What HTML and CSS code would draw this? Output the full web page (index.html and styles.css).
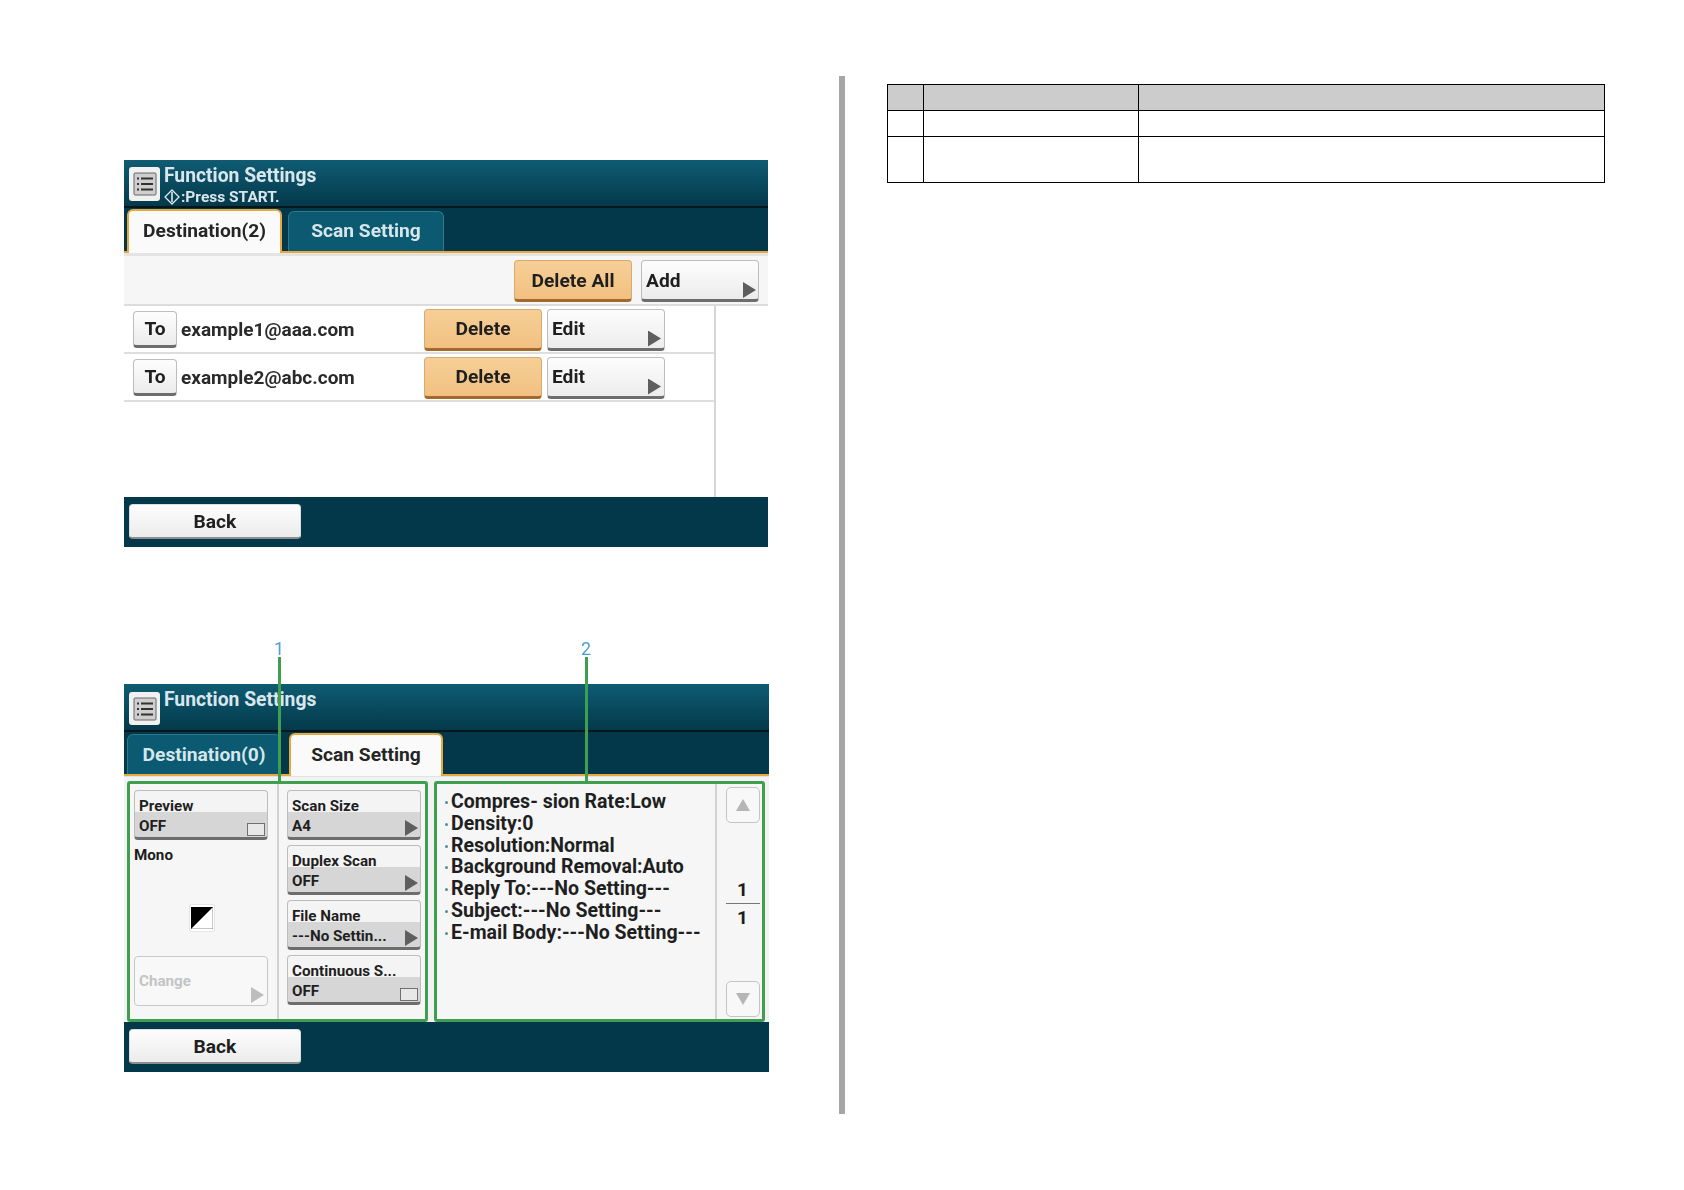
FILE: index.html
```html
<!DOCTYPE html>
<html lang="en">
<head>
<meta charset="utf-8">
<title>Function Settings</title>
<link rel="stylesheet" href="styles.css">
</head>
<body>
<div class="page">
  <main class="shots">
    <section class="panel panel-one">
      <header class="title">
        <span class="menu-icon"><svg viewBox="0 0 24 24" width="24" height="24"><rect x="1" y="1" width="22" height="22" rx="1" fill="#cfcfcf" stroke="#666"/><path d="M4 6.500h2M8 6.500h12M4 12h2M8 12h12M4 17.500h2M8 17.500h12" stroke="#333" stroke-width="2"/></svg></span>
        <div class="title-text">
          <div class="title-main">Function Settings</div>
          <div class="title-sub"><svg viewBox="0 0 16 16" width="16" height="16"><path d="M8 1l7 7-7 7-7-7z" fill="none" stroke="#dfe9ec" stroke-width="1.300"/><path d="M8 3v10" stroke="#dfe9ec" stroke-width="1.600"/></svg>:Press START.</div>
        </div>
      </header>
      <nav class="tabs">
        <div class="tab tab-active tab-first">Destination(2)</div>
        <div class="tab tab-idle tab-second">Scan Setting</div>
      </nav>
      <div class="body-one">
        <div class="toolbar">
          <button class="btn btn-orange btn-wide">Delete All</button>
          <button class="btn btn-light btn-wide btn-left arrow">Add</button>
        </div>
        <div class="list-area">
          <div class="list">
            <div class="row">
              <button class="btn btn-light btn-to">To</button>
              <span class="email">example1@aaa.com</span>
              <button class="btn btn-orange btn-wide">Delete</button>
              <button class="btn btn-light btn-wide btn-left arrow">Edit</button>
            </div>
            <div class="row">
              <button class="btn btn-light btn-to">To</button>
              <span class="email">example2@abc.com</span>
              <button class="btn btn-orange btn-wide">Delete</button>
              <button class="btn btn-light btn-wide btn-left arrow">Edit</button>
            </div>
          </div>
        </div>
      </div>
      <footer class="foot"><button class="btn btn-light btn-back">Back</button></footer>
    </section>

    <section class="panel panel-two">
      <span class="callout callout-a">1</span>
      <span class="callout callout-b">2</span>
      <i class="lead lead-a"></i>
      <i class="lead lead-b"></i>
      <header class="title">
        <span class="menu-icon menu-icon-low"><svg viewBox="0 0 24 24" width="24" height="24"><rect x="1" y="1" width="22" height="22" rx="1" fill="#cfcfcf" stroke="#666"/><path d="M4 6.500h2M8 6.500h12M4 12h2M8 12h12M4 17.500h2M8 17.500h12" stroke="#333" stroke-width="2"/></svg></span>
        <div class="title-text"><div class="title-main">Function Settings</div></div>
      </header>
      <nav class="tabs tabs-two">
        <div class="tab tab-idle tab-first">Destination(0)</div>
        <div class="tab tab-active tab-second">Scan Setting</div>
      </nav>
      <div class="body-two">
        <div class="box box-left">
          <div class="col col-a">
            <button class="btn btn-two btn-block square"><span>Preview</span><span>OFF</span></button>
            <div class="mono">Mono</div>
            <div class="mono-wrap"><span class="mono-icon"><svg viewBox="0 0 20 20" width="22" height="22"><rect width="20" height="20" fill="#fff" stroke="#999"/><path d="M0 0h20L0 20z" fill="#000"/></svg></span></div>
            <button class="btn btn-off btn-block arrow arrow-dim">Change</button>
          </div>
          <div class="col col-b">
            <button class="btn btn-two btn-block arrow"><span>Scan Size</span><span>A4</span></button>
            <button class="btn btn-two btn-block arrow"><span>Duplex Scan</span><span>OFF</span></button>
            <button class="btn btn-two btn-block arrow"><span>File Name</span><span>---No Settin...</span></button>
            <button class="btn btn-two btn-block square"><span>Continuous S...</span><span>OFF</span></button>
          </div>
        </div>
        <div class="box box-right">
          <ul class="summary">
            <li>Compres- sion Rate:Low</li>
            <li>Density:0</li>
            <li>Resolution:Normal</li>
            <li>Background Removal:Auto</li>
            <li>Reply To:---No Setting---</li>
            <li>Subject:---No Setting---</li>
            <li>E-mail Body:---No Setting---</li>
          </ul>
          <div class="pager">
            <button class="page-btn"><svg viewBox="0 0 14 12" width="14" height="12"><path d="M7 0l7 12H0z" fill="#b5b5b5"/></svg></button>
            <div class="fraction"><span>1</span><span class="denominator">1</span></div>
            <button class="page-btn"><svg viewBox="0 0 14 12" width="14" height="12"><path d="M7 12L0 0h14z" fill="#b5b5b5"/></svg></button>
          </div>
        </div>
      </div>
      <footer class="foot"><button class="btn btn-light btn-back">Back</button></footer>
    </section>
  </main>
  <div class="rule"></div>
  <aside class="side">
    <table class="grid">
      <colgroup><col class="c1"><col class="c2"><col class="c3"></colgroup>
      <thead><tr class="r-head"><th></th><th></th><th></th></tr></thead>
      <tbody>
        <tr class="r-one"><td></td><td></td><td></td></tr>
        <tr class="r-two"><td></td><td></td><td></td></tr>
      </tbody>
    </table>
  </aside>
</div>
</body>
</html>
```
FILE: styles.css
```css
* { box-sizing: border-box; }
html, body { margin: 0; background: #fff; }
body { font-family: Roboto, "Liberation Sans", sans-serif; color: #1c1c1c; }
.page { display: flex; width: 1684px; height: 1190px; overflow: hidden; }
.shots { width: 839px; padding: 160px 0 0 124px; display: flex; flex-direction: column; gap: 137px; }
.rule { width: 6px; height: 1038px; margin-top: 76px; background: #a6a6a6; }
.side { padding: 84px 0 0 42px; }

.panel { position: relative; width: 644px; display: flex; flex-direction: column; background: #f6f6f6; filter: blur(0.45px); }
.panel-one { height: 387px; }
.panel-two { width: 645px; height: 388px; }
.title { height: 48px; flex: none; display: flex; gap: 4px; padding: 7px 0 0 5px; background: linear-gradient(#0f5c73, #04394b); border-bottom: 2px solid #02161d; color: #d9e7ec; }
.menu-icon { width: 31px; height: 34px; flex: none; display: flex; align-items: center; justify-content: center; background: #f1f1f1; border-radius: 3px; }
.menu-icon-low { margin-top: 1px; height: 33px; }
.title-main { font-size: 19.300px; font-weight: 700; line-height: 18px; }
.title-sub { font-size: 15.500px; font-weight: 700; line-height: 18px; margin-top: 3px; display: flex; align-items: center; }
.title-sub svg { margin-right: 1px; }

.tabs { height: 45px; flex: none; display: flex; align-items: flex-end; gap: 6px; padding-left: 3px; background: #023849; border-bottom: 2px solid #e9a83e; }
.tabs-two { height: 44px; }
.tab { font-size: 19.200px; font-weight: 700; display: flex; align-items: center; justify-content: center; border-radius: 6px 6px 0 0; }
.tab-first { width: 155px; }
.tab-second { width: 156px; }
.tab-active { height: 44px; margin-bottom: -2px; padding-bottom: 4px; background: #fafafa; color: #252525; border: 2px solid #e9a83e; border-bottom: 0; }
.tab-idle { height: 40px; padding-bottom: 3px; background: #0b5a72; color: #d6e6ea; border: 1px solid #2c7b8a; border-bottom: 0; }
.tabs-two .tab-first { width: 154px; padding-bottom: 1px; }
.tabs-two .tab-second { width: 154px; height: 43px; padding-bottom: 2px; margin-left: 2px; }

.btn { position: relative; font: 700 19.200px Roboto, "Liberation Sans", sans-serif; color: #1f1f1f; border: 1px solid #bdbdbd; border-bottom: 3px solid #6d6d6d; border-radius: 4px; padding: 0; }
.btn-orange { background: linear-gradient(#f6cf97, #f2c081); border-color: #d8aa6d; border-bottom-color: #a4682a; }
.btn-light { background: linear-gradient(#fdfdfd, #ececec); }
.btn-wide { width: 118px; height: 42px; flex: none; }
.btn-left { text-align: left; padding-left: 4px; }
.arrow::after { content: ""; position: absolute; right: 2px; bottom: 1px; width: 13px; height: 16px; background: #5e5e5e; clip-path: polygon(0 0, 100% 50%, 0 100%); }
.arrow-dim::after { background: #bdbdbd; right: 3px; bottom: 2px; }

.body-one { flex: 1; display: flex; flex-direction: column; background: #fff; }
.toolbar { height: 53px; flex: none; display: flex; justify-content: flex-end; align-items: center; gap: 9px; padding: 3px 9px 1px 0; background: #f6f6f6; border-top: 3px solid #e4e4e4; border-bottom: 2px solid #dcdcdc; }
.list-area { flex: 1; width: 592px; border-right: 2px solid #d6d6d6; }
.row { height: 48px; display: flex; align-items: center; padding: 1px 0 0 9px; border-bottom: 2px solid #dedede; }
.btn-to { width: 44px; height: 37px; flex: none; }
.email { width: 247px; padding-left: 4px; font-size: 19px; font-weight: 700; white-space: nowrap; color: #2a2a2a; }
.row .btn-wide + .btn-wide { margin-left: 5px; }
.row .arrow::after { right: 3px; }

.foot { height: 50px; flex: none; display: flex; align-items: center; padding: 0 0 1px 5px; background: #023849; }
.btn-back { width: 172px; height: 35px; border-bottom-width: 2px; border-color: #ddd; border-bottom-color: #8d8d8d; }

.body-two { height: 246px; flex: none; display: flex; gap: 6px; padding: 4px 3px 0 3px; background: #f2f2f2; border-top: 1px solid #e2e2e2; }
.box { height: 241px; border: 3px solid #3f9f50; border-radius: 3px; display: flex; background: #f6f6f6; }
.box-left { width: 301px; flex: none; }
.box-right { width: 331px; flex: none; }
.col { display: flex; flex-direction: column; padding: 6px 0 0 4px; }
.col-a { width: 149px; border-right: 2px solid #d2d2d2; }
.col-b { width: 146px; padding-left: 8px; gap: 5px; }
.btn-block { width: 134px; height: 50px; flex: none; }
.btn-two { display: flex; flex-direction: column; padding: 5px 0 0 4px; background: linear-gradient(#f4f4f4 0 46%, #d6d6d6 46% 100%); font-size: 15.200px; line-height: 20px; align-items: flex-start; text-align: left; }
.square::after { content: ""; position: absolute; right: 2px; bottom: 1px; width: 16px; height: 11px; background: #e8e8e8; border: 1.500px solid #707070; }
.mono { font-size: 15.200px; font-weight: 700; height: 20px; margin-top: 6px; }
.mono-wrap { height: 90px; display: flex; align-items: center; justify-content: center; padding: 14px 7px 0 0; }
.mono-icon { width: 26px; height: 28px; display: flex; align-items: center; justify-content: center; background: #fff; border: 1px solid #e6e6e6; border-radius: 2px; }
.btn-off { background: #f8f8f8; border: 1px solid #c8c8c8; color: #c4c4c4; font-size: 15.200px; text-align: left; padding-left: 4px; }

.summary { list-style: none; margin: 0; padding: 7px 0 0 14px; width: 280px; border-right: 2px solid #d2d2d2; font-size: 19.500px; font-weight: 700; line-height: 21.800px; color: #1f1f1f; white-space: nowrap; }
.summary li { position: relative; }
.summary li::before { content: ""; position: absolute; left: -6px; top: 10px; width: 3px; height: 3px; border-radius: 50%; background: #4d8f9e; }
.pager { flex: 1; display: flex; flex-direction: column; align-items: center; padding: 3px 0 2px 6px; }
.page-btn { width: 34px; height: 36px; flex: none; padding: 0; display: flex; align-items: center; justify-content: center; background: #f8f8f8; border: 1px solid #c4c4c4; border-radius: 5px; }
.fraction { flex: 1; width: 34px; display: flex; flex-direction: column; align-items: center; justify-content: flex-end; padding-bottom: 50px; font-size: 19px; font-weight: 700; line-height: 26px; }
.fraction span:first-child { width: 100%; text-align: center; border-bottom: 1px solid #777; }
.denominator { padding-top: 1px; }

.callout { position: absolute; top: -45px; font-size: 18px; line-height: 20px; color: #4a9fd8; transform: translateX(-50%); }
.callout-a { left: 155px; }
.callout-b { left: 462px; }
.lead { position: absolute; z-index: 2; top: -27px; width: 3px; height: 124px; background: #3f9f50; }
.lead-a { left: 154px; }
.lead-b { left: 461px; }

.grid { width: 718px; height: 98px; border-collapse: collapse; table-layout: fixed; }
.grid th, .grid td { border: 1.500px solid #000; padding: 0; }
.grid th { background: #ccc; }
.c1 { width: 36px; }
.c2 { width: 215px; }
.r-head { height: 26px; }
.r-one { height: 26px; }
.r-two { height: 46px; }
```
